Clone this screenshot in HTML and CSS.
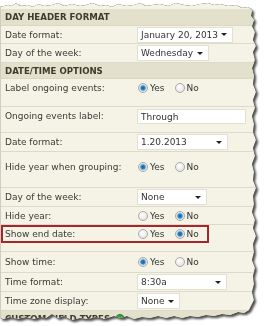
FILE: index.html
```html
<!DOCTYPE html>
<html lang="en">
<head>
<meta charset="UTF-8" />
<meta name="viewport" content="width=device-width, initial-scale=1" />
<title>Calendar display options</title>
<link rel="stylesheet" href="styles.css">
</head>
<body>

<div class="sheet">
  <div class="panel">

    <div class="head h17">Day Header Format</div>
    <div class="row h18">
      <span class="lbl">Date format:</span>
      <div class="val"><div class="select w96">January 20, 2013<i class="arrow"></i></div></div>
    </div>
    <div class="row h19">
      <span class="lbl">Day of the week:</span>
      <div class="val"><div class="select w72">Wednesday<i class="arrow"></i></div></div>
    </div>

    <div class="head h16">Date/Time Options</div>
    <div class="row top h28">
      <span class="lbl">Label ongoing events:</span>
      <div class="val">
        <label class="opt"><input type="radio" name="ongoing" checked> Yes</label>
        <label class="opt"><input type="radio" name="ongoing"> No</label>
      </div>
    </div>
    <div class="row top h26">
      <span class="lbl">Ongoing events label:</span>
      <div class="val"><input class="field" type="text" value="Through"></div>
    </div>
    <div class="row h19">
      <span class="lbl">Date format:</span>
      <div class="val"><div class="select w91">1.20.2013<i class="arrow"></i></div></div>
    </div>
    <div class="row top h36 pad7">
      <span class="lbl">Hide year when grouping:</span>
      <div class="val">
        <label class="opt"><input type="radio" name="grouping" checked> Yes</label>
        <label class="opt"><input type="radio" name="grouping"> No</label>
      </div>
    </div>
    <div class="row h19">
      <span class="lbl">Day of the week:</span>
      <div class="val"><div class="select w70">None<i class="arrow"></i></div></div>
    </div>
    <div class="row h18">
      <span class="lbl">Hide year:</span>
      <div class="val">
        <label class="opt"><input type="radio" name="hideyear"> Yes</label>
        <label class="opt"><input type="radio" name="hideyear" checked> No</label>
      </div>
    </div>
    <div class="row top h27 marked">
      <span class="lbl">Show end date:</span>
      <div class="val">
        <label class="opt"><input type="radio" name="enddate"> Yes</label>
        <label class="opt"><input type="radio" name="enddate" checked> No</label>
      </div>
      <span class="highlight"></span>
    </div>
    <div class="row h21">
      <span class="lbl">Show time:</span>
      <div class="val">
        <label class="opt"><input type="radio" name="showtime" checked> Yes</label>
        <label class="opt"><input type="radio" name="showtime"> No</label>
      </div>
    </div>
    <div class="row h19">
      <span class="lbl">Time format:</span>
      <div class="val"><div class="select w90">8:30a<i class="arrow"></i></div></div>
    </div>
    <div class="row h19">
      <span class="lbl">Time zone display:</span>
      <div class="val"><div class="select w43">None<i class="arrow"></i></div></div>
    </div>

    <div class="head h17">Custom Field Types <span class="badge"></span></div>

  </div>
</div>

</body>
</html>
```

FILE: styles.css
```css
body {
  margin: 0;
  background: #fff;
  font-family: "DejaVu Sans", Verdana, sans-serif;
  font-size: 9px;
  color: #3a3a36;
}

/* torn-paper look */
.sheet {
  width: 264px;
  height: 326px;
  filter: drop-shadow(0 0 0.6px rgba(0,0,0,0.9)) drop-shadow(2px 2px 1.2px rgba(0,0,0,0.7));
}
.panel {
  height: 326px;
  box-sizing: border-box;
  padding-top: 9px;
  background: #f4f3e5;
  border-left: 1px solid #cfcdbf;
  overflow: hidden;
  clip-path: polygon(
    0px 7px, 8px 5px, 12px 6px, 16px 3px, 20px 6px, 28px 5px, 33px 7px, 38px 4px,
    44px 6px, 52px 5px, 58px 3px, 64px 6px, 72px 4px, 80px 6px, 86px 5px, 92px 3px,
    100px 6px, 106px 5px, 112px 7px, 118px 4px, 126px 6px, 134px 5px, 140px 3px,
    146px 6px, 152px 5px, 160px 4px, 168px 6px, 176px 3px, 184px 5px, 192px 6px,
    200px 4px, 208px 3px, 214px 5px, 220px 4px, 228px 6px, 236px 5px, 242px 8px,
    248px 7px, 252px 10px, 251px 16px, 254px 20px, 252px 26px, 255px 32px,
    253px 40px, 256px 46px, 253px 52px, 255px 60px, 252px 68px, 254px 76px,
    253px 84px, 256px 92px, 253px 100px, 255px 108px, 252px 116px, 254px 124px,
    253px 132px, 256px 140px, 253px 148px, 255px 156px, 252px 164px, 254px 172px,
    253px 180px, 256px 188px, 253px 196px, 254px 204px, 252px 212px, 255px 220px,
    253px 228px, 256px 236px, 253px 244px, 254px 252px, 252px 260px, 255px 268px,
    253px 276px, 254px 284px, 252px 292px, 254px 300px, 251px 306px, 249px 310px,
    244px 313px, 238px 312px, 230px 315px, 222px 314px, 214px 316px, 206px 315px,
    198px 317px, 190px 316px, 182px 318px, 174px 316px, 166px 318px, 158px 316px,
    150px 318px, 142px 317px, 134px 319px, 127px 316px, 121px 318px, 114px 316px,
    104px 319px, 96px 317px, 88px 319px, 80px 318px, 72px 320px, 64px 316px,
    58px 318px, 52px 314px, 46px 318px, 40px 317px, 34px 319px, 26px 317px,
    18px 319px, 10px 317px, 4px 319px, 0px 318px
  );
}

.head {
  display: flex;
  align-items: center;
  gap: 5px;
  box-sizing: border-box;
  padding-left: 4px;
  background: #e3e1cb;
  border-bottom: 1px solid #dad8c2;
  font-weight: bold;
  font-size: 8.6px;
  text-transform: uppercase;
  color: #3b3b2e;
}
.badge {
  width: 8px;
  height: 8px;
  border-radius: 50%;
  background: #3aa53a;
  border: 1px solid #2a7a2a;
}

.row {
  position: relative;
  display: grid;
  grid-template-columns: 132px 1fr;
  align-items: center;
  box-sizing: border-box;
  padding-left: 4px;
  border-bottom: 1px solid #dcdac9;
}
.row.top {
  align-items: start;
  padding-top: 1px;
}
.row.pad7 { padding-top: 7px; }

.h16 { height: 16px; }
.h17 { height: 17px; }
.h18 { height: 18px; }
.h19 { height: 19px; }
.h21 { height: 21px; }
.h26 { height: 26px; }
.h27 { height: 27px; }
.h28 { height: 28px; }
.h36 { height: 36px; }

.lbl {
  line-height: 16px;
  white-space: nowrap;
}
.val {
  display: flex;
  align-items: center;
  height: 16px;
}

.select {
  display: flex;
  align-items: center;
  box-sizing: border-box;
  height: 16px;
  padding-left: 3px;
  background: #fff;
  border: 1px solid #e2e0d3;
  color: #333;
}
.w96 { width: 96px; }
.w91 { width: 91px; }
.w90 { width: 90px; }
.w72 { width: 72px; }
.w70 { width: 70px; }
.w43 { width: 43px; }
.arrow {
  margin-left: auto;
  margin-right: 5px;
  border-left: 3px solid transparent;
  border-right: 3px solid transparent;
  border-top: 3px solid #222;
}

.field {
  box-sizing: border-box;
  width: 109px;
  height: 15px;
  margin: 1px 0 0;
  padding: 0 3px;
  background: #fff;
  border: 1px solid #e2e0d3;
  font: inherit;
  color: #333;
}

.opt {
  display: inline-flex;
  align-items: center;
  gap: 2px;
  margin-left: 1px;
  margin-right: 9px;
  color: #333;
}
.opt input {
  appearance: none;
  width: 10px;
  height: 10px;
  margin: 0;
  border-radius: 50%;
  border: 1px solid #a9a9a9;
  background: radial-gradient(circle at 40% 35%, #fff, #dcdcdc);
}
.opt input:checked {
  background: radial-gradient(circle, #1d5f9a 0, #2d86c4 2px, #b9cfe0 3px, #f2f2f2 4px);
}

.highlight {
  position: absolute;
  left: 0;
  top: 0;
  width: 208px;
  height: 18px;
  box-sizing: border-box;
  border: 2px solid #a3282d;
}
```
